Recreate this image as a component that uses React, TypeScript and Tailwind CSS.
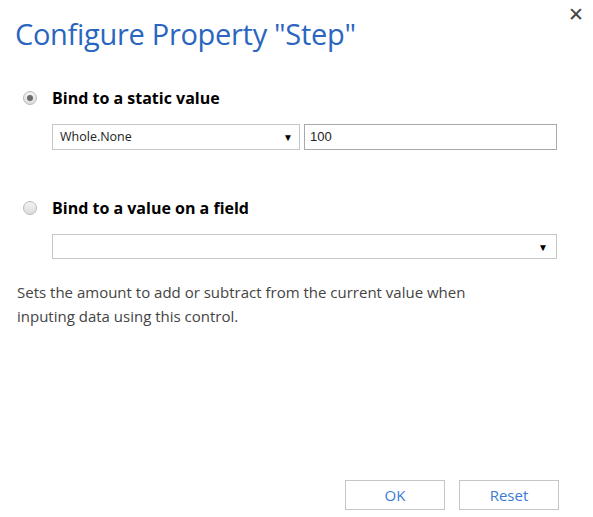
import React from "react";

function Radio({ checked }: { checked?: boolean }) {
    return (
        <span className="w-[14px] h-[14px] rounded-full border border-[#b9b9b9] bg-gradient-to-b from-[#f4f4f4] to-[#dcdcdc] flex items-center justify-center shrink-0">
            {checked && <span className="w-[6px] h-[6px] rounded-full bg-[#6b6b6b]" />}
        </span>
    );
}

function Caret() {
    return <span className="text-[10px] text-black leading-none">▼</span>;
}

export default function App() {
    return (
        <div className="relative w-[593px] h-[517px] bg-white flex flex-col font-['Open_Sans',sans-serif] text-[#444]">
            <button className="absolute top-[5px] right-[9px] text-[19px] leading-none text-[#444]">✕</button>

            <h1 className="pl-[15px] pt-[14px] text-[29px] leading-[40px] text-[#2a66c0] tracking-[-0.3px]">
                Configure Property "Step"
            </h1>

            <div className="pl-[23px] mt-[33px] flex items-center gap-[15px]">
                <Radio checked />
                <span className="text-[16px] leading-[22px] font-bold text-black">Bind to a static value</span>
            </div>
            <div className="pl-[52px] pr-[36px] mt-[15px] flex gap-[4px]">
                <div className="w-[248px] h-[26px] border border-[#c6c6c6] flex items-center justify-between pl-[7px] pr-[6px]">
                    <span className="text-[12.5px] text-[#222]">Whole.None</span>
                    <Caret />
                </div>
                <div className="flex-1 h-[26px] border border-[#a9a9a9] flex items-center pl-[5px]">
                    <span className="text-[13px] text-[#222] font-['Liberation_Sans',sans-serif]">100</span>
                </div>
            </div>

            <div className="pl-[23px] mt-[47px] flex items-center gap-[15px]">
                <Radio />
                <span className="text-[16px] leading-[22px] font-bold text-black">Bind to a value on a field</span>
            </div>
            <div className="pl-[52px] pr-[36px] mt-[15px]">
                <div className="h-[25px] border border-[#c6c6c6] flex items-center justify-end pr-[8px]">
                    <Caret />
                </div>
            </div>

            <p className="pl-[17px] w-[490px] mt-[21px] text-[15px] leading-[24px] text-[#444]">
                Sets the amount to add or subtract from the current value when inputing data using this control.
            </p>

            <div className="mt-auto pb-[7px] pr-[34px] flex justify-end gap-[14px]">
                <button className="w-[100px] h-[30px] border border-[#c6c6c6] text-[15px] text-[#3b7bd6] bg-white">OK</button>
                <button className="w-[100px] h-[30px] border border-[#c6c6c6] text-[15px] text-[#3b7bd6] bg-white">Reset</button>
            </div>
        </div>
    );
}
